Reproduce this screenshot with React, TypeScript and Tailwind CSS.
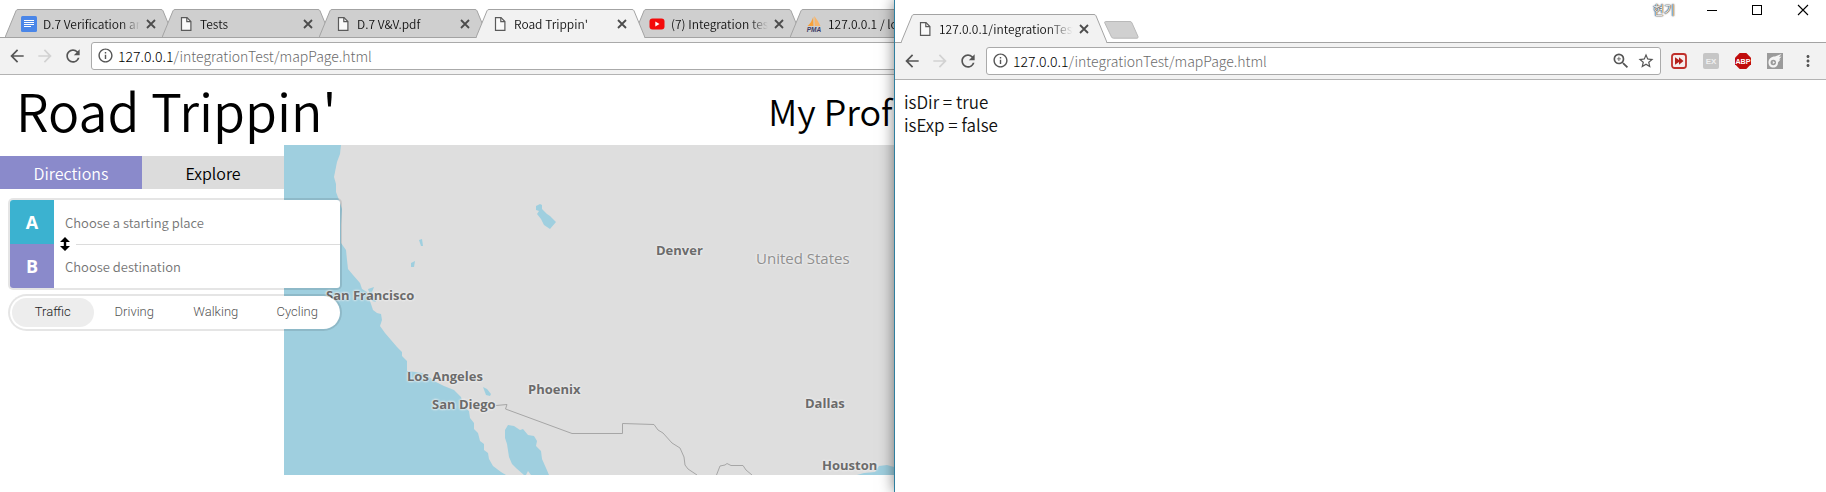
import type { ReactNode } from 'react';
import { MdArrowBack, MdArrowForward, MdRefresh, MdInfoOutline, MdStarBorder, MdZoomIn, MdMoreVert } from 'react-icons/md';

function TabShape({ width, active }: { width: number; active?: boolean }) {
  return (
    <svg aria-hidden="true" className="absolute inset-0" width={width} height={29} viewBox={`0 0 ${width} 29`}>
      <path
        d={`M0 28.5 L11 1.8 Q11.600 .5 13 .5 H${width - 13} Q${width - 11.6} .5 ${width - 11} 1.800 L${width} 28.5`}
        fill={active ? '#f2f2f2' : '#cfcfcf'}
        stroke="#a3a3a3"
      />
      {active ? <path d={`M1 28.500 H${width - 1}`} stroke="#f2f2f2" /> : <path d={`M0 28.500 H${width}`} stroke="#a0a0a0" />}
    </svg>
  );
}

function PageIcon() {
  return (
    <svg aria-hidden="true" width="16" height="16" viewBox="0 0 16 16" fill="#fafafa" stroke="#5a5a5a" strokeWidth="1.2">
      <path d="M3.500 1.600 H9 L12.900 5.500 V14.400 H3.500 Z" />
      <path d="M8.800 1.600 V5.700 H12.900" fill="none" />
    </svg>
  );
}

function DocsIcon() {
  return (
    <svg aria-hidden="true" width="16" height="16" viewBox="0 0 16 16">
      <rect width="16" height="16" rx="1.5" fill="#4a86e8" />
      <path d="M3 4.500h10M3 6.500h10M3 8.500h10M3 10.500h7" stroke="#fff" />
    </svg>
  );
}

function VideoIcon() {
  return (
    <svg aria-hidden="true" width="16" height="16" viewBox="0 0 16 16">
      <rect x=".5" y="2.500" width="15" height="11" rx="3" fill="#f40a0a" />
      <path d="M6.300 5.600 L10.500 8 L6.300 10.400 Z" fill="#fff" />
    </svg>
  );
}

function SailIcon() {
  return (
    <svg aria-hidden="true" width="16" height="16" viewBox="0 0 16 16">
      <path d="M7.200 .8 L7.500 10 H1.500 Q5.800 6.500 7.200 .8 Z" fill="#f8a13a" />
      <path d="M8.300 0 Q12 4.500 14.500 10 H8.700 Z" fill="#f8b56a" />
      <text x="8" y="15.500" fontSize="6.500" fontWeight="700" fontStyle="italic" textAnchor="middle" fill="#3d3d66" fontFamily="Liberation Sans, sans-serif">
        PMA
      </text>
    </svg>
  );
}

type TabProps = { title: string; icon: ReactNode; wide?: boolean; active?: boolean };

function Tab({ title, icon, wide, active }: TabProps) {
  return (
    <div
      role="tab"
      aria-selected={!!active}
      className={`relative -mr-3 flex h-[29px] shrink-0 items-center gap-[6px] pl-4 pr-[18px] ${wide ? 'w-[206px]' : 'w-[169px]'} ${active ? 'z-10' : ''}`}
    >
      <TabShape width={wide ? 206 : 169} active={active} />
      <span className="relative shrink-0">{icon}</span>
      <span
        className={`relative min-w-0 flex-1 overflow-hidden whitespace-nowrap bg-gradient-to-r from-[#111] from-80% bg-clip-text text-[12px] leading-5 text-transparent ${active ? 'to-[#f2f2f2]' : 'to-[#cfcfcf]'}`}
      >
        {title}
      </span>
      <button type="button" aria-label={`Close ${title}`} className="relative shrink-0">
        <svg aria-hidden="true" width="10" height="10" viewBox="0 0 10 10">
          <path d="M1 1L9 9M9 1L1 9" stroke="#4c4c4c" strokeWidth="1.800" />
        </svg>
      </button>
    </div>
  );
}

function Toolbar({ id, children, actions }: { id: string; children?: ReactNode; actions?: ReactNode }) {
  return (
    <div className="flex h-[38px] items-center border-b border-[#b3b3b3] bg-[#f2f2f2] pl-[7px]">
      <div className="flex gap-2 text-[#555]">
        <button type="button" aria-label="Back"><MdArrowBack className="size-5" /></button>
        <button type="button" aria-label="Forward" className="text-[#d2d2d2]"><MdArrowForward className="size-5" /></button>
        <button type="button" aria-label="Reload"><MdRefresh className="size-5" /></button>
      </div>
      <div className="relative ml-2 flex h-7 min-w-0 flex-1 items-center rounded-[3px] border border-[#aaa] bg-white pl-[5px] pr-[5px]">
        <MdInfoOutline className="size-[17px] shrink-0 text-[#555]" />
        <label htmlFor={id} className="sr-only">Address</label>
        <div className="relative ml-1 h-5 min-w-0 flex-1">
          <input id={id} type="text" defaultValue="" className="absolute inset-0 w-full bg-transparent outline-none" />
          <span className="pointer-events-none relative block whitespace-nowrap text-sm font-light leading-5 text-[#6b6b6b]">
            <span className="text-black">127.0.0.1</span>/integrationTest/mapPage.html
          </span>
        </div>
        {children}
      </div>
      {actions}
    </div>
  );
}

const cities = [
  { name: 'San Francisco', place: 'left-[42px] top-[141px]' },
  { name: 'Los Angeles', place: 'left-[123px] top-[222px]' },
  { name: 'San Diego', place: 'left-[148px] top-[250px]' },
  { name: 'Phoenix', place: 'left-[244px] top-[235px]' },
  { name: 'Denver', place: 'left-[372px] top-[96px]' },
  { name: 'Dallas', place: 'left-[521px] top-[249px]' },
  { name: 'Houston', place: 'left-[538px] top-[311px]' },
];

const halo = '[text-shadow:0_0_2px_#eee,0_0_2px_#eee,0_0_3px_#eee]';

function MapView() {
  return (
    <section aria-label="Map" className="relative h-[330px] flex-1 overflow-hidden bg-[#dedede] font-['Open_Sans',sans-serif]">
      <svg aria-hidden="true" className="absolute left-0 top-0" width="680" height="330" viewBox="0 0 680 330">
        <g fill="#9fcfdf">
          <path d="M0 0H57L56 9L53 17L50 32L52 39V47L55 55L58 64L57 80V98L62 105L63 115L64 124L69 130L76 138L78 144L83 147L87 159L89 165L93 168L97 169L98 175L96 181L101 188L107 195L113 202L118 207V211L123 216V226L131 227L138 228L144 231L150 236L160 241L170 245L177 252L180 262L185 266L186 273L190 278V284L194 288L196 296L200 299V305L204 308L205 314L209 321L217 327L222 330H0Z" />
          <path d="M84 144L90 142L88 147L92 157L88 156Z" />
          <path d="M135 95L138 94L139 101L137 101Z M127 118L131 116L130 122L127 122Z" />
          <path d="M252 61L256 59L258 60L258 64L263 69L266 71L272 77L266 84L260 80L257 74L253 69L255 66L252 65Z" />
          <path d="M199 242L203 244L207 249L206 251L202 250Z" />
          <path d="M221 285L224 280L230 281L236 285L239 284L244 290L250 291L253 296L252 301L257 306L258 314L262 323L265 330H247L244 326L242 330H240L232 323L228 319L225 312L223 299L221 293Z" />
          <path d="M573 330L580 328L591 327L595 321L603 320L610 322L616 326V330Z M616 326L640 320L680 322V330H610Z" />
        </g>
        <g fill="none" stroke="#a6a6a6" strokeWidth="1">
          <path d="M212 260.500L223 259.500L221.500 264L288 288.500H338.500V278.500L370 279.500L374 285L379 288L388 298L396 303L400 312L401 320L404 324L413 330" />
          <path d="M432.500 330L436 321L441 320L443 318.500L447 320.500H459L462 325L468 330" />
        </g>
      </svg>
      {cities.map((city) => (
        <span key={city.name} className={`absolute whitespace-nowrap text-[13px] font-bold leading-[19px] text-[#6b6b6b] ${halo} ${city.place}`}>
          {city.name}
        </span>
      ))}
      <span className={`absolute left-[472px] top-[102px] whitespace-nowrap text-[15px] font-normal leading-[22px] text-[#8f8f8f] ${halo}`}>United States</span>
    </section>
  );
}

const modes = ['Traffic', 'Driving', 'Walking', 'Cycling'];

function Planner() {
  return (
    <div className="relative z-10 ml-[10px] w-[330px]">
      <form className="relative mt-[11px] rounded-[3px] bg-white shadow-[0_0_0_2px_rgba(0,0,0,0.1)]">
        <div className="flex h-11 items-center overflow-hidden rounded-tl-[3px]">
          <label htmlFor="origin" className="grid h-11 w-11 place-items-center bg-[#3bb2d0] font-['Open_Sans',sans-serif] text-lg font-bold text-white">A</label>
          <input id="origin" placeholder="Choose a starting place" className="min-w-0 flex-1 px-[11px] pt-px text-[13px] outline-none placeholder:text-[#757575]" />
        </div>
        <div className="flex h-11 items-center overflow-hidden rounded-bl-[3px]">
          <label htmlFor="destination" className="grid h-11 w-11 place-items-center bg-[#8a8acb] font-['Open_Sans',sans-serif] text-lg font-bold text-white">B</label>
          <input id="destination" placeholder="Choose destination" className="min-w-0 flex-1 px-[11px] pt-px text-[13px] outline-none placeholder:text-[#757575]" />
        </div>
        <div className="absolute left-[66px] right-0 top-11 h-px bg-[#dcdcdc]" />
        <button type="button" aria-label="Swap start and destination" className="absolute left-[50px] top-[37px]">
          <svg aria-hidden="true" width="10" height="14" viewBox="0 0 10 14">
            <path d="M5 0L10 5H6.200V9H10L5 14L0 9H3.800V5H0Z" fill="#000" />
          </svg>
        </button>
      </form>
      <div className="mt-2 grid h-[33px] grid-cols-4 rounded-full bg-white p-[2px] font-['Roboto',sans-serif] text-[13px] font-light shadow-[0_0_0_2px_rgba(0,0,0,0.1)]">
        {modes.map((mode, i) => (
          <button key={mode} type="button" className={`rounded-full pb-[2px] ${i === 0 ? 'bg-[#ededed] text-[#222]' : 'text-[#555]'}`}>
            {mode}
          </button>
        ))}
      </div>
    </div>
  );
}

function MapWindow() {
  return (
    <section aria-label="Road Trippin' browser" className="overflow-hidden bg-white">
      <div role="tablist" className="relative flex pl-[5px] pt-[9px] after:absolute after:inset-x-0 after:bottom-0 after:h-px after:bg-[#a3a3a3]">
        <Tab title="D.7 Verification and Validation" icon={<DocsIcon />} />
        <Tab title="Tests" icon={<PageIcon />} />
        <Tab title="D.7 V&V.pdf" icon={<PageIcon />} />
        <Tab title="Road Trippin'" icon={<PageIcon />} active />
        <Tab title="(7) Integration testing" icon={<VideoIcon />} />
        <Tab title="127.0.0.1 / localhost" icon={<SailIcon />} />
      </div>
      <div className="-mt-px w-[960px]"><Toolbar id="map-address" /></div>
      <div className="min-w-[960px] text-black">
        <header className="flex h-[70px] items-center justify-between pl-4 pr-7">
          <h1 className="whitespace-nowrap text-[52px] leading-[70px]">Road Trippin'</h1>
          <a href="#profile" className="whitespace-nowrap text-[36px] leading-[70px]">My Profile</a>
        </header>
        <div className="flex items-start">
          <aside className="w-[284px] shrink-0 pt-[11px]">
            <div className="grid h-[33px] grid-cols-2 text-base">
              <button type="button" className="bg-[#8a8acb] text-white">Directions</button>
              <button type="button" className="bg-[#dcdcdc]">Explore</button>
            </div>
            <Planner />
          </aside>
          <MapView />
        </div>
      </div>
    </section>
  );
}

function Extensions() {
  return (
    <div className="ml-[10px] mr-[9px] flex shrink-0 items-center gap-4">
      <button type="button" aria-label="Fast forward">
        <svg aria-hidden="true" width="16" height="16" viewBox="0 0 16 16">
          <rect x="1" y="1" width="14" height="14" rx="2.500" fill="#f6eeee" stroke="#c0302b" strokeWidth="1.800" />
          <path d="M4 4.200L8 7V4.200L12.500 8L8 11.800V9L4 11.800Z" fill="#b3221d" />
        </svg>
      </button>
      <button type="button" aria-label="EX">
        <svg aria-hidden="true" width="16" height="16" viewBox="0 0 16 16">
          <rect width="16" height="16" rx="2" fill="#c6c6c6" />
          <text x="8" y="11" fontSize="8" fontWeight="700" textAnchor="middle" fill="#f0f0f0" fontFamily="Liberation Sans, sans-serif">EX</text>
        </svg>
      </button>
      <button type="button" aria-label="Ad blocker">
        <svg aria-hidden="true" width="16" height="16" viewBox="0 0 16 16">
          <path d="M4.700 0H11.300L16 4.700V11.300L11.300 16H4.700L0 11.300V4.700Z" fill="#c00d0d" />
          <text x="8" y="10.700" fontSize="7.200" fontWeight="700" textAnchor="middle" fill="#fff" fontFamily="Liberation Sans, sans-serif">ABP</text>
        </svg>
      </button>
      <button type="button" aria-label="Comet">
        <svg aria-hidden="true" width="16" height="16" viewBox="0 0 16 16">
          <rect width="16" height="16" fill="#9b9b9b" />
          <path d="M1.500 9.500C1.500 6 4 3.500 8 3.500L14.500 1L12 4L14.500 3.500L12 6.500L13.500 6.500L11 9.500C11 13 9 14.500 6.500 14.500C3.500 14.500 1.500 12.500 1.500 9.500Z" fill="#f4f4f4" />
          <circle cx="6.300" cy="9.500" r="2.700" fill="#9b9b9b" />
          <path d="M5.800 8L8 9.500L5.800 11Z" fill="#f4f4f4" />
        </svg>
      </button>
      <button type="button" aria-label="Menu"><MdMoreVert className="size-[18px] text-[#555]" /></button>
    </div>
  );
}

function ResultWindow() {
  return (
    <section aria-label="Result browser" className="relative z-20 border-l border-[#2f7f9f] bg-white shadow-[0_0_14px_rgba(0,0,0,0.5)]">
      <div className="relative flex h-[43px] items-end pl-[6px]">
        <div className="absolute inset-x-0 bottom-0 h-px bg-[#a3a3a3]" />
        <Tab title="127.0.0.1/integrationTest/mapPage.html" icon={<PageIcon />} wide active />
        <button type="button" aria-label="New tab" className="mb-1 ml-[9px]">
          <svg aria-hidden="true" width="35" height="18" viewBox="0 0 35 18">
            <path d="M1.500 .5H26Q27.500 .5 28 2L34 15.500Q34.500 17.200 33 17.200H9.500Q8 17.200 7.500 16L.8 2Q.3 .5 1.500 .5Z" fill="#d0d0d0" stroke="#b9b9b9" />
          </svg>
        </button>
        <div className="absolute right-[17px] top-0 flex items-center">
          <span className="mr-8 text-[12px] leading-5 text-white [text-shadow:0_0_1px_#222,0_0_1px_#222,0_0_2px_#444]">현기</span>
          <div className="flex h-5 items-center gap-[35px]">
            <button type="button" aria-label="Minimize" className="grid size-[10px] place-items-center"><span className="h-px w-[10px] bg-black" /></button>
            <button type="button" aria-label="Maximize" className="size-[10px] border border-black" />
            <button type="button" aria-label="Close window">
              <svg aria-hidden="true" width="12" height="12" viewBox="0 0 12 12"><path d="M1 1L11 11M11 1L1 11" stroke="#000" strokeWidth="1.100" /></svg>
            </button>
          </div>
        </div>
      </div>
      <div className="-mt-px">
        <Toolbar id="result-address" actions={<Extensions />}>
          <div className="flex shrink-0 items-center gap-[6px] text-[#555]">
            <button type="button" aria-label="Zoom"><MdZoomIn className="size-5" /></button>
            <button type="button" aria-label="Bookmark"><MdStarBorder className="size-[18px]" /></button>
          </div>
        </Toolbar>
      </div>
      <main className="px-[9px] pt-[10px] text-[17px] leading-[23px] text-[#111]">
        <p>isDir = true</p>
        <p>isExp = false</p>
      </main>
    </section>
  );
}

export default function App() {
  return (
    <div className="grid min-h-screen grid-cols-[447fr_466fr] overflow-hidden bg-white font-['Noto_Sans_CJK_KR',sans-serif] font-[350]">
      <MapWindow />
      <ResultWindow />
    </div>
  );
}
